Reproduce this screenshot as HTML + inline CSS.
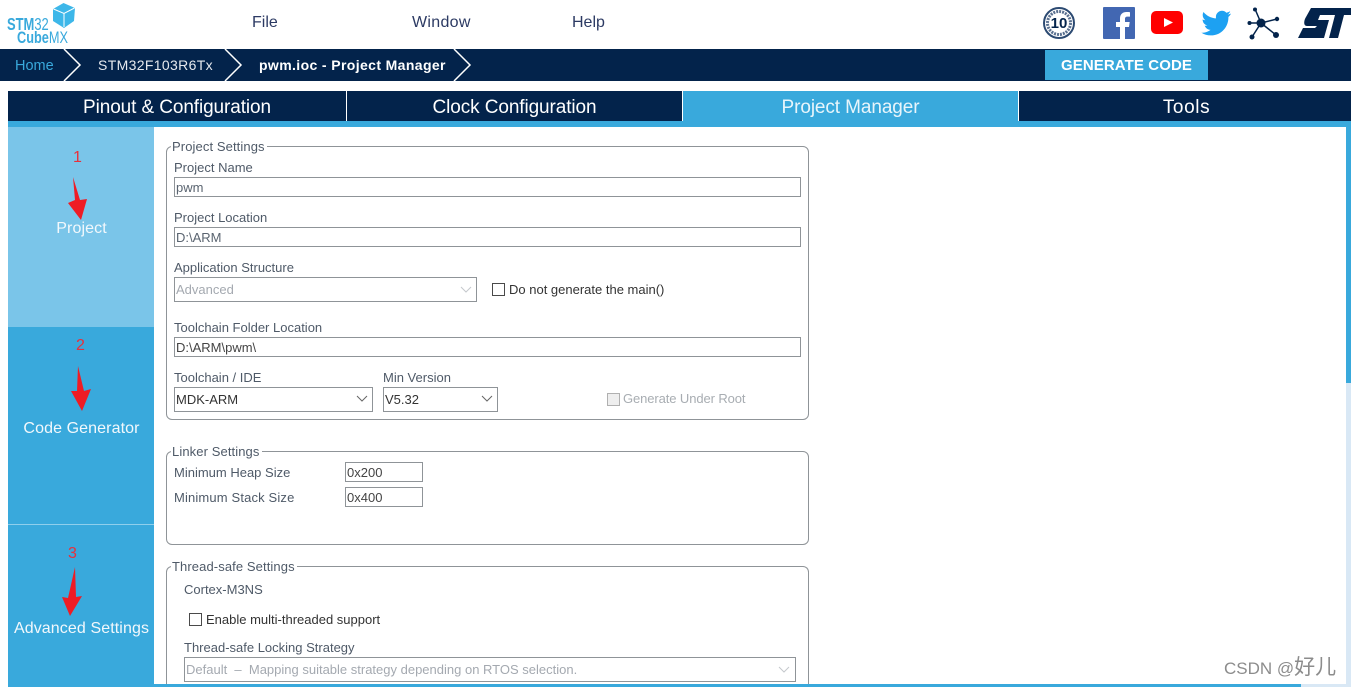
<!DOCTYPE html>
<html><head><meta charset="utf-8"><title>STM32CubeMX</title>
<style>
html{margin:0;padding:0;background:#fff;width:1351px;height:687px;overflow:hidden}
body{margin:0;padding:0;background:#fff;width:1351px;height:687px;position:relative;overflow:hidden;font-family:"Liberation Sans","Noto Sans CJK SC",sans-serif}
.a{position:absolute}
.t{position:absolute;white-space:nowrap;line-height:16px;height:16px;color:#4f5a68;font-size:13px}
.c{position:absolute;text-align:center;white-space:nowrap}
.menu{font-size:16px;color:#2c3a63;line-height:20px;top:13px}
.tab{position:absolute;top:91px;height:30px;background:#03234B;color:#fff;font-size:19px;line-height:33px;text-align:center;letter-spacing:-.1px}
.side{left:8px;width:147px;color:#f2f8fc;font-size:16px;line-height:20px;letter-spacing:.1px}
.box{position:absolute;border:1px solid #8f9498;border-radius:6px;box-sizing:border-box}
.leg{position:absolute;background:#fff;padding:0 2px 0 1px;white-space:nowrap;color:#4f5a68;font-size:13px;line-height:16px;height:16px;letter-spacing:.1px}
.in{position:absolute;border:1px solid #8f9498;box-sizing:border-box;background:#fff;color:#5a6470;font-size:13px;white-space:nowrap;padding-left:1px}
.dis{color:#a4a9b0}
.cb{position:absolute;width:11px;height:11px;border:1px solid #4a4a4a;background:#fff}
svg{position:absolute;overflow:visible}
</style></head><body>

<!-- logo -->
<svg style="left:52px;top:2px" width="24" height="26" viewBox="0 0 24 26"><path d="M11.500 1L23 6 22 19 12 26 1 19 1 7Z" fill="#3DB7E9"/><path d="M1.500 7L12 11.500 22.500 6M12 11.500V25" stroke="#fff" stroke-width="1" fill="none"/></svg>
<div class="a" style="left:7px;top:15px;font-size:17.500px;line-height:19px;font-weight:700;color:#39A9DC;transform:scaleX(.74);transform-origin:0 0;white-space:nowrap">STM<span style="font-weight:400">32</span></div>
<div class="a" style="left:17px;top:29px;font-size:17px;line-height:18px;font-weight:700;color:#39A9DC;transform:scaleX(.75);transform-origin:0 0;white-space:nowrap">Cube<span style="font-weight:400">MX</span></div>

<div class="c menu" style="left:252px">File</div>
<div class="c menu" style="left:412px;letter-spacing:.3px">Window</div>
<div class="c menu" style="left:572px">Help</div>

<!-- social icons -->
<svg style="left:1043px;top:7px" width="32" height="32" viewBox="0 0 32 32"><circle cx="16" cy="16" r="15" fill="#fff" stroke="#2c4a72" stroke-width="2"/><circle cx="16" cy="16" r="11.500" fill="none" stroke="#5b7190" stroke-width="3" stroke-dasharray="2 1"/><text x="16" y="21" text-anchor="middle" font-family="Liberation Sans" font-weight="700" font-size="15" fill="#03234B">10</text></svg>
<svg style="left:1103px;top:7px" width="32" height="32" viewBox="0 0 32 32"><rect width="32" height="32" rx="1" fill="#4267B2"/><path d="M22 32V20h4l.7-5H22v-3c0-1.500.6-2.400 2.500-2.400H27V5.200C26.300 5.100 25 5 23.500 5 19.800 5 17 7.200 17 11.500V15h-4v5h4v12Z" fill="#fff"/></svg>
<svg style="left:1151px;top:11px" width="32" height="24" viewBox="0 0 32 24"><rect width="32" height="23" rx="5" fill="#FF0000"/><path d="M13 7l9 4.500-9 4.500Z" fill="#fff"/></svg>
<svg style="left:1200px;top:10px" width="31" height="26" viewBox="0 0 31 26"><path d="M31 3.500c-1 .5-2.200.8-3.400 1C28.900 3.700 29.800 2.600 30.200 1.200c-1.200.7-2.500 1.200-3.800 1.500C25.300 1.500 23.700.8 22 .8c-3.400 0-6.100 2.800-6.100 6.200 0 .5 0 1 .2 1.400C11 8.100 6.500 5.700 3.500 2 3 2.900 2.700 4 2.700 5.100c0 2.100 1.100 4 2.700 5.100-1 0-2-.3-2.800-.8v.1c0 3 2.100 5.500 4.900 6-.5.100-1.100.2-1.600.2-.4 0-.8 0-1.200-.1.800 2.400 3.100 4.200 5.800 4.300C8.400 21.600 5.700 22.700 2.800 22.700c-.5 0-1 0-1.500-.1 2.800 1.800 6 2.800 9.500 2.800 11.400 0 17.600-9.500 17.600-17.700v-.8c1.100-.9 2-1.900 2.600-3.400Z" fill="#1DA1F2"/></svg>
<svg style="left:1247px;top:7px" width="33" height="33" viewBox="0 0 33 33"><g stroke="#03234B" stroke-width="1.500" fill="none"><path d="M14 16L8 2M14 16L30 12M14 16L2 16M14 16L5 30M14 16L29 28"/></g><g fill="#03234B"><circle cx="14" cy="16" r="4.500"/><circle cx="8" cy="2.500" r="2"/><circle cx="30" cy="12" r="2.200"/><circle cx="2.500" cy="16" r="2"/><circle cx="5" cy="30" r="2.500"/><circle cx="29" cy="28" r="3"/></g></svg>
<svg style="left:1298px;top:7px" width="53" height="33" viewBox="0 0 53 33"><path d="M13 1H53V8H46L40 31H31L37 8H22L20 13H31L26 31H0L5 21H17L19 19H9C5 19 6 13 8 10Z" fill="#03234B"/></svg>

<!-- breadcrumb bar -->
<div class="a" style="left:0;top:49px;width:1351px;height:32px;background:#03234B"></div>
<svg style="left:0;top:49px" width="500" height="32" viewBox="0 0 500 32"><g fill="none" stroke="#fff" stroke-width="1.500"><path d="M64 0L80 16 64 32"/><path d="M225 0L241 16 225 32"/><path d="M454 0L470 16 454 32"/></g></svg>
<div class="t" style="left:15px;top:58px;font-size:14.500px;color:#39A9DC">Home</div>
<div class="t" style="left:98px;top:57px;font-size:14px;color:#e6e9ee;letter-spacing:.35px">STM32F103R6Tx</div>
<div class="t" style="left:259px;top:57px;font-size:14px;font-weight:700;color:#fff;letter-spacing:.38px">pwm.ioc - Project Manager</div>
<div class="a" style="left:1045px;top:50px;width:163px;height:30px;background:#39A9DC;color:#fff;font-weight:700;font-size:15px;line-height:31px;text-align:center;letter-spacing:.1px">GENERATE CODE</div>

<!-- tabs -->
<div class="tab" style="left:8px;width:338px">Pinout &amp; Configuration</div>
<div class="tab" style="left:347px;width:335px">Clock Configuration</div>
<div class="tab" style="left:683px;width:335px;background:#39A9DC;color:#e8f5fb">Project Manager</div>
<div class="tab" style="left:1019px;width:335px;letter-spacing:.6px">Tools</div>
<div class="a" style="left:8px;top:121px;width:1338px;height:6px;background:#39A9DC"></div>

<!-- sidebar -->
<div class="a" style="left:8px;top:127px;width:146px;height:200px;background:#7AC5E9"></div>
<div class="a" style="left:8px;top:327px;width:146px;height:360px;background:#39A9DC"></div>
<div class="a" style="left:8px;top:524px;width:146px;height:1px;background:#8fcfec"></div>
<div class="c side" style="top:219px">Project</div>
<div class="c side" style="top:419px">Code Generator</div>
<div class="c side" style="top:619px">Advanced Settings</div>

<!-- red annotations -->
<div class="a" style="left:73px;top:149px;font-size:16px;line-height:18px;color:#e8303c">1</div>
<div class="a" style="left:76px;top:337px;font-size:16px;line-height:18px;color:#e8303c">2</div>
<div class="a" style="left:68px;top:545px;font-size:16px;line-height:18px;color:#e8303c">3</div>
<svg style="left:0;top:0" width="160" height="687"><g fill="#EE1C25"><path d="M73 177L80 200 87 199 81 220 68 203 75 200Z"/><path d="M78 366L84 391 91 389 82 411 71 391 77 391Z"/><path d="M75 567L76 597 82 596 70 616 62 597 68 598Z"/></g></svg>

<!-- Project settings -->
<div class="box" style="left:166px;top:146px;width:643px;height:274px"></div>
<div class="leg" style="left:171px;top:139px">Project Settings</div>
<div class="t" style="left:174px;top:160px">Project Name</div>
<div class="in" style="left:174px;top:177px;width:627px;height:20px;line-height:19px">pwm</div>
<div class="t" style="left:174px;top:210px">Project Location</div>
<div class="in" style="left:174px;top:227px;width:627px;height:20px;line-height:19px">D:\ARM</div>
<div class="t" style="left:174px;top:260px">Application Structure</div>
<div class="in dis" style="left:174px;top:277px;width:303px;height:25px;line-height:23px">Advanced</div>
<svg style="left:460px;top:286px" width="12" height="8"><path d="M1 1L6 6 11 1" fill="none" stroke="#c4c8cc" stroke-width="1"/></svg>
<div class="cb" style="left:492px;top:283px"></div>
<div class="t" style="left:509px;top:282px;color:#333">Do not generate the main()</div>
<div class="t" style="left:174px;top:320px">Toolchain Folder Location</div>
<div class="in" style="left:174px;top:337px;width:627px;height:20px;line-height:19px;color:#444">D:\ARM\pwm\</div>
<div class="t" style="left:174px;top:370px">Toolchain / IDE</div>
<div class="in" style="left:174px;top:387px;width:199px;height:25px;line-height:23px;color:#333">MDK-ARM</div>
<svg style="left:356px;top:395px" width="12" height="8"><path d="M1 1L6 6 11 1" fill="none" stroke="#666" stroke-width="1"/></svg>
<div class="t" style="left:383px;top:370px">Min Version</div>
<div class="in" style="left:383px;top:387px;width:115px;height:25px;line-height:23px;color:#333">V5.32</div>
<svg style="left:481px;top:395px" width="12" height="8"><path d="M1 1L6 6 11 1" fill="none" stroke="#666" stroke-width="1"/></svg>
<div class="cb" style="left:607px;top:393px;border-color:#b0b0b0;background:#eee"></div>
<div class="t" style="left:623px;top:391px;color:#a8adb2;letter-spacing:-.1px">Generate Under Root</div>

<!-- Linker -->
<div class="box" style="left:166px;top:451px;width:643px;height:94px"></div>
<div class="leg" style="left:171px;top:444px">Linker Settings</div>
<div class="t" style="left:174px;top:465px">Minimum Heap Size</div>
<div class="in" style="left:345px;top:462px;width:78px;height:20px;line-height:19px;color:#444">0x200</div>
<div class="t" style="left:174px;top:490px;letter-spacing:.15px">Minimum Stack Size</div>
<div class="in" style="left:345px;top:487px;width:78px;height:20px;line-height:19px;color:#444">0x400</div>

<!-- Thread-safe -->
<div class="box" style="left:166px;top:566px;width:643px;height:121px;border-bottom:0;border-radius:6px 6px 0 0"></div>
<div class="leg" style="left:171px;top:559px">Thread-safe Settings</div>
<div class="t" style="left:184px;top:582px">Cortex-M3NS</div>
<div class="cb" style="left:189px;top:613px"></div>
<div class="t" style="left:206px;top:612px;color:#333">Enable multi-threaded support</div>
<div class="t" style="left:184px;top:640px">Thread-safe Locking Strategy</div>
<div class="in dis" style="left:184px;top:657px;width:612px;height:25px;line-height:24px">Default &nbsp;&#8211;&nbsp; Mapping suitable strategy depending on RTOS selection.</div>
<svg style="left:778px;top:666px" width="12" height="8"><path d="M1 1L6 6 11 1" fill="none" stroke="#c4c8cc" stroke-width="1"/></svg>

<!-- scrollbars -->
<div class="a" style="left:1346px;top:121px;width:5px;height:566px;background:#D9E8F5"></div>
<div class="a" style="left:1346px;top:121px;width:5px;height:262px;background:#39A9DC"></div>
<div class="a" style="left:154px;top:684px;width:1192px;height:3px;background:#D9E8F5"></div>
<div class="a" style="left:154px;top:684px;width:1147px;height:3px;background:#39A9DC"></div>

<!-- watermark -->
<div class="a" style="left:1224px;top:657px;font-size:17px;line-height:22px;color:#8c8c8c;white-space:nowrap;font-family:'Liberation Sans','Noto Sans CJK SC',sans-serif">CSDN @<span style="font-size:21px">好儿</span></div>
</body></html>
